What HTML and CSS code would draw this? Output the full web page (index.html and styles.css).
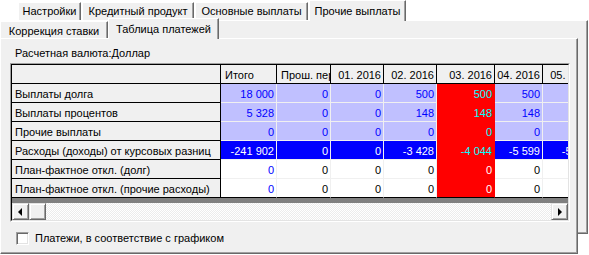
FILE: index.html
```html
<!DOCTYPE html>
<html lang="ru">
<head>
    <meta charset="UTF-8">
    <title>Таблица платежей</title>
    <link rel="stylesheet" href="styles.css">
</head>
<body>
    <div class="outer-tabs">
        <div class="tab tab-settings">Настройки</div>
        <div class="tab tab-product">Кредитный продукт</div>
        <div class="tab tab-main">Основные выплаты</div>
        <div class="tab tab-other active">Прочие выплаты</div>
    </div>
    <div class="outer-page">
        <div class="inner-tabs">
            <div class="tab tab-rate">Коррекция ставки</div>
            <div class="tab tab-table active">Таблица платежей</div>
        </div>
        <div class="inner-page">
            <div class="currency">Расчетная валюта:Доллар</div>
            <div class="grid">
                <div class="grid-in">
                    <div class="rows">
                        <div class="row head">
                            <div class="cell fix"></div>
                            <div class="cell left">Итого</div>
                            <div class="cell left">Прош. период</div>
                            <div class="cell">01. 2016</div>
                            <div class="cell">02. 2016</div>
                            <div class="cell">03. 2016</div>
                            <div class="cell">04. 2016</div>
                            <div class="cell">05. 2016</div>
                        </div>
                        <div class="row lav">
                            <div class="cell fix">Выплаты долга</div>
                            <div class="cell total">18 000</div>
                            <div class="cell">0</div>
                            <div class="cell">0</div>
                            <div class="cell">500</div>
                            <div class="cell hot">500</div>
                            <div class="cell">500</div>
                            <div class="cell">500</div>
                        </div>
                        <div class="row lav">
                            <div class="cell fix">Выплаты процентов</div>
                            <div class="cell total">5 328</div>
                            <div class="cell">0</div>
                            <div class="cell">0</div>
                            <div class="cell">148</div>
                            <div class="cell hot">148</div>
                            <div class="cell">148</div>
                            <div class="cell">148</div>
                        </div>
                        <div class="row lav">
                            <div class="cell fix">Прочие выплаты</div>
                            <div class="cell total">0</div>
                            <div class="cell">0</div>
                            <div class="cell">0</div>
                            <div class="cell">0</div>
                            <div class="cell hot">0</div>
                            <div class="cell">0</div>
                            <div class="cell">0</div>
                        </div>
                        <div class="row blue">
                            <div class="cell fix">Расходы (доходы) от курсовых разниц</div>
                            <div class="cell total">-241 902</div>
                            <div class="cell">0</div>
                            <div class="cell">0</div>
                            <div class="cell">-3 428</div>
                            <div class="cell hot">-4 044</div>
                            <div class="cell">-5 599</div>
                            <div class="cell">-5 744</div>
                        </div>
                        <div class="row white">
                            <div class="cell fix">План-фактное откл. (долг)</div>
                            <div class="cell total">0</div>
                            <div class="cell">0</div>
                            <div class="cell">0</div>
                            <div class="cell">0</div>
                            <div class="cell hot">0</div>
                            <div class="cell">0</div>
                            <div class="cell">0</div>
                        </div>
                        <div class="row white last">
                            <div class="cell fix">План-фактное откл. (прочие расходы)</div>
                            <div class="cell total">0</div>
                            <div class="cell">0</div>
                            <div class="cell">0</div>
                            <div class="cell">0</div>
                            <div class="cell hot">0</div>
                            <div class="cell">0</div>
                            <div class="cell">0</div>
                        </div>
                    </div>
                    <div class="band"></div>
                    <div class="hscroll">
                        <div class="sbtn"><span class="arrow-left"></span></div>
                        <div class="sbtn thumb"></div>
                        <div class="track"></div>
                        <div class="sbtn"><span class="arrow-right"></span></div>
                    </div>
                </div>
            </div>
            <div class="check-row">
                <span class="checkbox"></span>
                <span>Платежи, в соответствие с графиком</span>
            </div>
        </div>
    </div>
</body>
</html>
```

FILE: styles.css
```css
* {
    box-sizing: border-box;
}
body {
    margin: 0;
    width: 589px;
    height: 255px;
    overflow: hidden;
    background-color: #ffffff;
    color: #000000;
    font-family: 'Liberation Sans', Arial, sans-serif;
    font-size: 11px;
}

/* tabs */
.tab {
    background-color: #f0f0f0;
    border-top: 1px solid #ffffff;
    border-left: 1px solid #ffffff;
    border-right: 1px solid #696969;
    box-shadow: inset -1px 0 #a0a0a0;
    text-align: center;
    white-space: nowrap;
}
.tab.active {
    position: relative;
    z-index: 1;
    margin-bottom: -1px;
}
.outer-tabs {
    display: flex;
    align-items: flex-end;
    gap: 1px;
    height: 20px;
    padding-left: 18px;
}
.outer-tabs .tab {
    height: 18px;
    line-height: 16px;
}
.outer-tabs .tab.active {
    height: 21px;
    padding-top: 2px;
}
.tab-settings { width: 63px; }
.tab-product { width: 112px; }
.tab-main { width: 113px; }
.tab-other { width: 97px; }

.outer-page {
    width: 588px;
    height: 214px;
    background-color: #f0f0f0;
    border-top: 1px solid #ffffff;
    border-right: 1px solid #696969;
    border-bottom: 1px solid #696969;
    box-shadow: inset -1px -1px #a0a0a0;
}
.inner-tabs {
    display: flex;
    align-items: flex-end;
    height: 20px;
    margin-top: -3px;
}
.inner-tabs .tab {
    height: 17px;
    padding-top: 2px;
    line-height: 15px;
}
.inner-tabs .tab.active {
    height: 21px;
    line-height: 16px;
}
.tab-rate { width: 108px; }
.tab-table { width: 111px; }

.inner-page {
    width: 578px;
    height: 216px;
    padding-top: 8px;
    background-color: #f0f0f0;
    border: 1px solid;
    border-color: #ffffff #696969 #696969 #ffffff;
    box-shadow: inset -1px -1px #a0a0a0;
}
.currency {
    height: 13px;
    line-height: 13px;
    padding-left: 14px;
}

/* grid */
.grid {
    width: 560px;
    margin: 3px 0 0 9px;
    border: 1px solid;
    border-color: #a0a0a0 #ffffff #ffffff #a0a0a0;
}
.grid-in {
    border: 1px solid;
    border-color: #000000 #e3e3e3 #e3e3e3 #000000;
    overflow: hidden;
}
.rows {
    width: 556px;
    overflow: hidden;
}
.row {
    display: grid;
    grid-template-columns: 209px 56px 54px 53px 53px 58px 48px 53px;
    width: 584px;
    height: 19px;
}
.cell {
    height: 19px;
    padding: 2px 2px 0 0;
    line-height: 16px;
    text-align: right;
    white-space: nowrap;
    overflow: hidden;
    border-right: 1px solid #f0f0f0;
    border-bottom: 1px solid #f0f0f0;
}
.cell.left {
    text-align: left;
    padding-left: 4px;
}
.cell.fix {
    text-align: left;
    padding-left: 3px;
    background-color: #f0f0f0;
    color: #000000;
    border-color: #000000;
}
.head .cell {
    background-color: #f0f0f0;
    border-color: #000000;
}
.lav .cell {
    background-color: #c0c0ff;
    color: #0000ff;
}
.blue .cell {
    background-color: #0000ff;
    color: #ffffff;
}
.white .cell {
    background-color: #ffffff;
}
.white .cell.total {
    color: #0000ff;
}
.row .cell.hot {
    background-color: #ff0000;
    border-color: #ff0000;
    color: #00ffff;
}
.white .cell.hot {
    color: #ffffff;
}
.row.last .cell {
    border-bottom-color: #000000;
}
.row .cell.fix {
    background-color: #f0f0f0;
    color: #000000;
}
.band {
    height: 5px;
    background-color: #808080;
}
.hscroll {
    display: flex;
    height: 17px;
}
.sbtn {
    width: 17px;
    height: 17px;
    display: flex;
    align-items: center;
    justify-content: center;
    background-color: #f0f0f0;
    border: 1px solid;
    border-color: #e3e3e3 #696969 #696969 #e3e3e3;
    box-shadow: inset 1px 1px #ffffff, inset -1px -1px #a0a0a0;
}
.track {
    flex: 1;
    background: repeating-conic-gradient(#ffffff 0 25%, #ececec 0 50%) 0 0 / 2px 2px;
}
.arrow-left {
    border-top: 4px solid transparent;
    border-bottom: 4px solid transparent;
    border-right: 4px solid #000000;
    margin-left: -1px;
}
.arrow-right {
    border-top: 4px solid transparent;
    border-bottom: 4px solid transparent;
    border-left: 4px solid #000000;
    margin-left: 1px;
}

/* checkbox */
.check-row {
    display: flex;
    align-items: center;
    gap: 6px;
    height: 13px;
    line-height: 13px;
    margin: 10px 0 0 15px;
}
.checkbox {
    width: 13px;
    height: 13px;
    background-color: #ffffff;
    border: 1px solid;
    border-color: #a0a0a0 #ffffff #ffffff #a0a0a0;
    box-shadow: inset 1px 1px #696969, inset -1px -1px #e3e3e3;
}
```
